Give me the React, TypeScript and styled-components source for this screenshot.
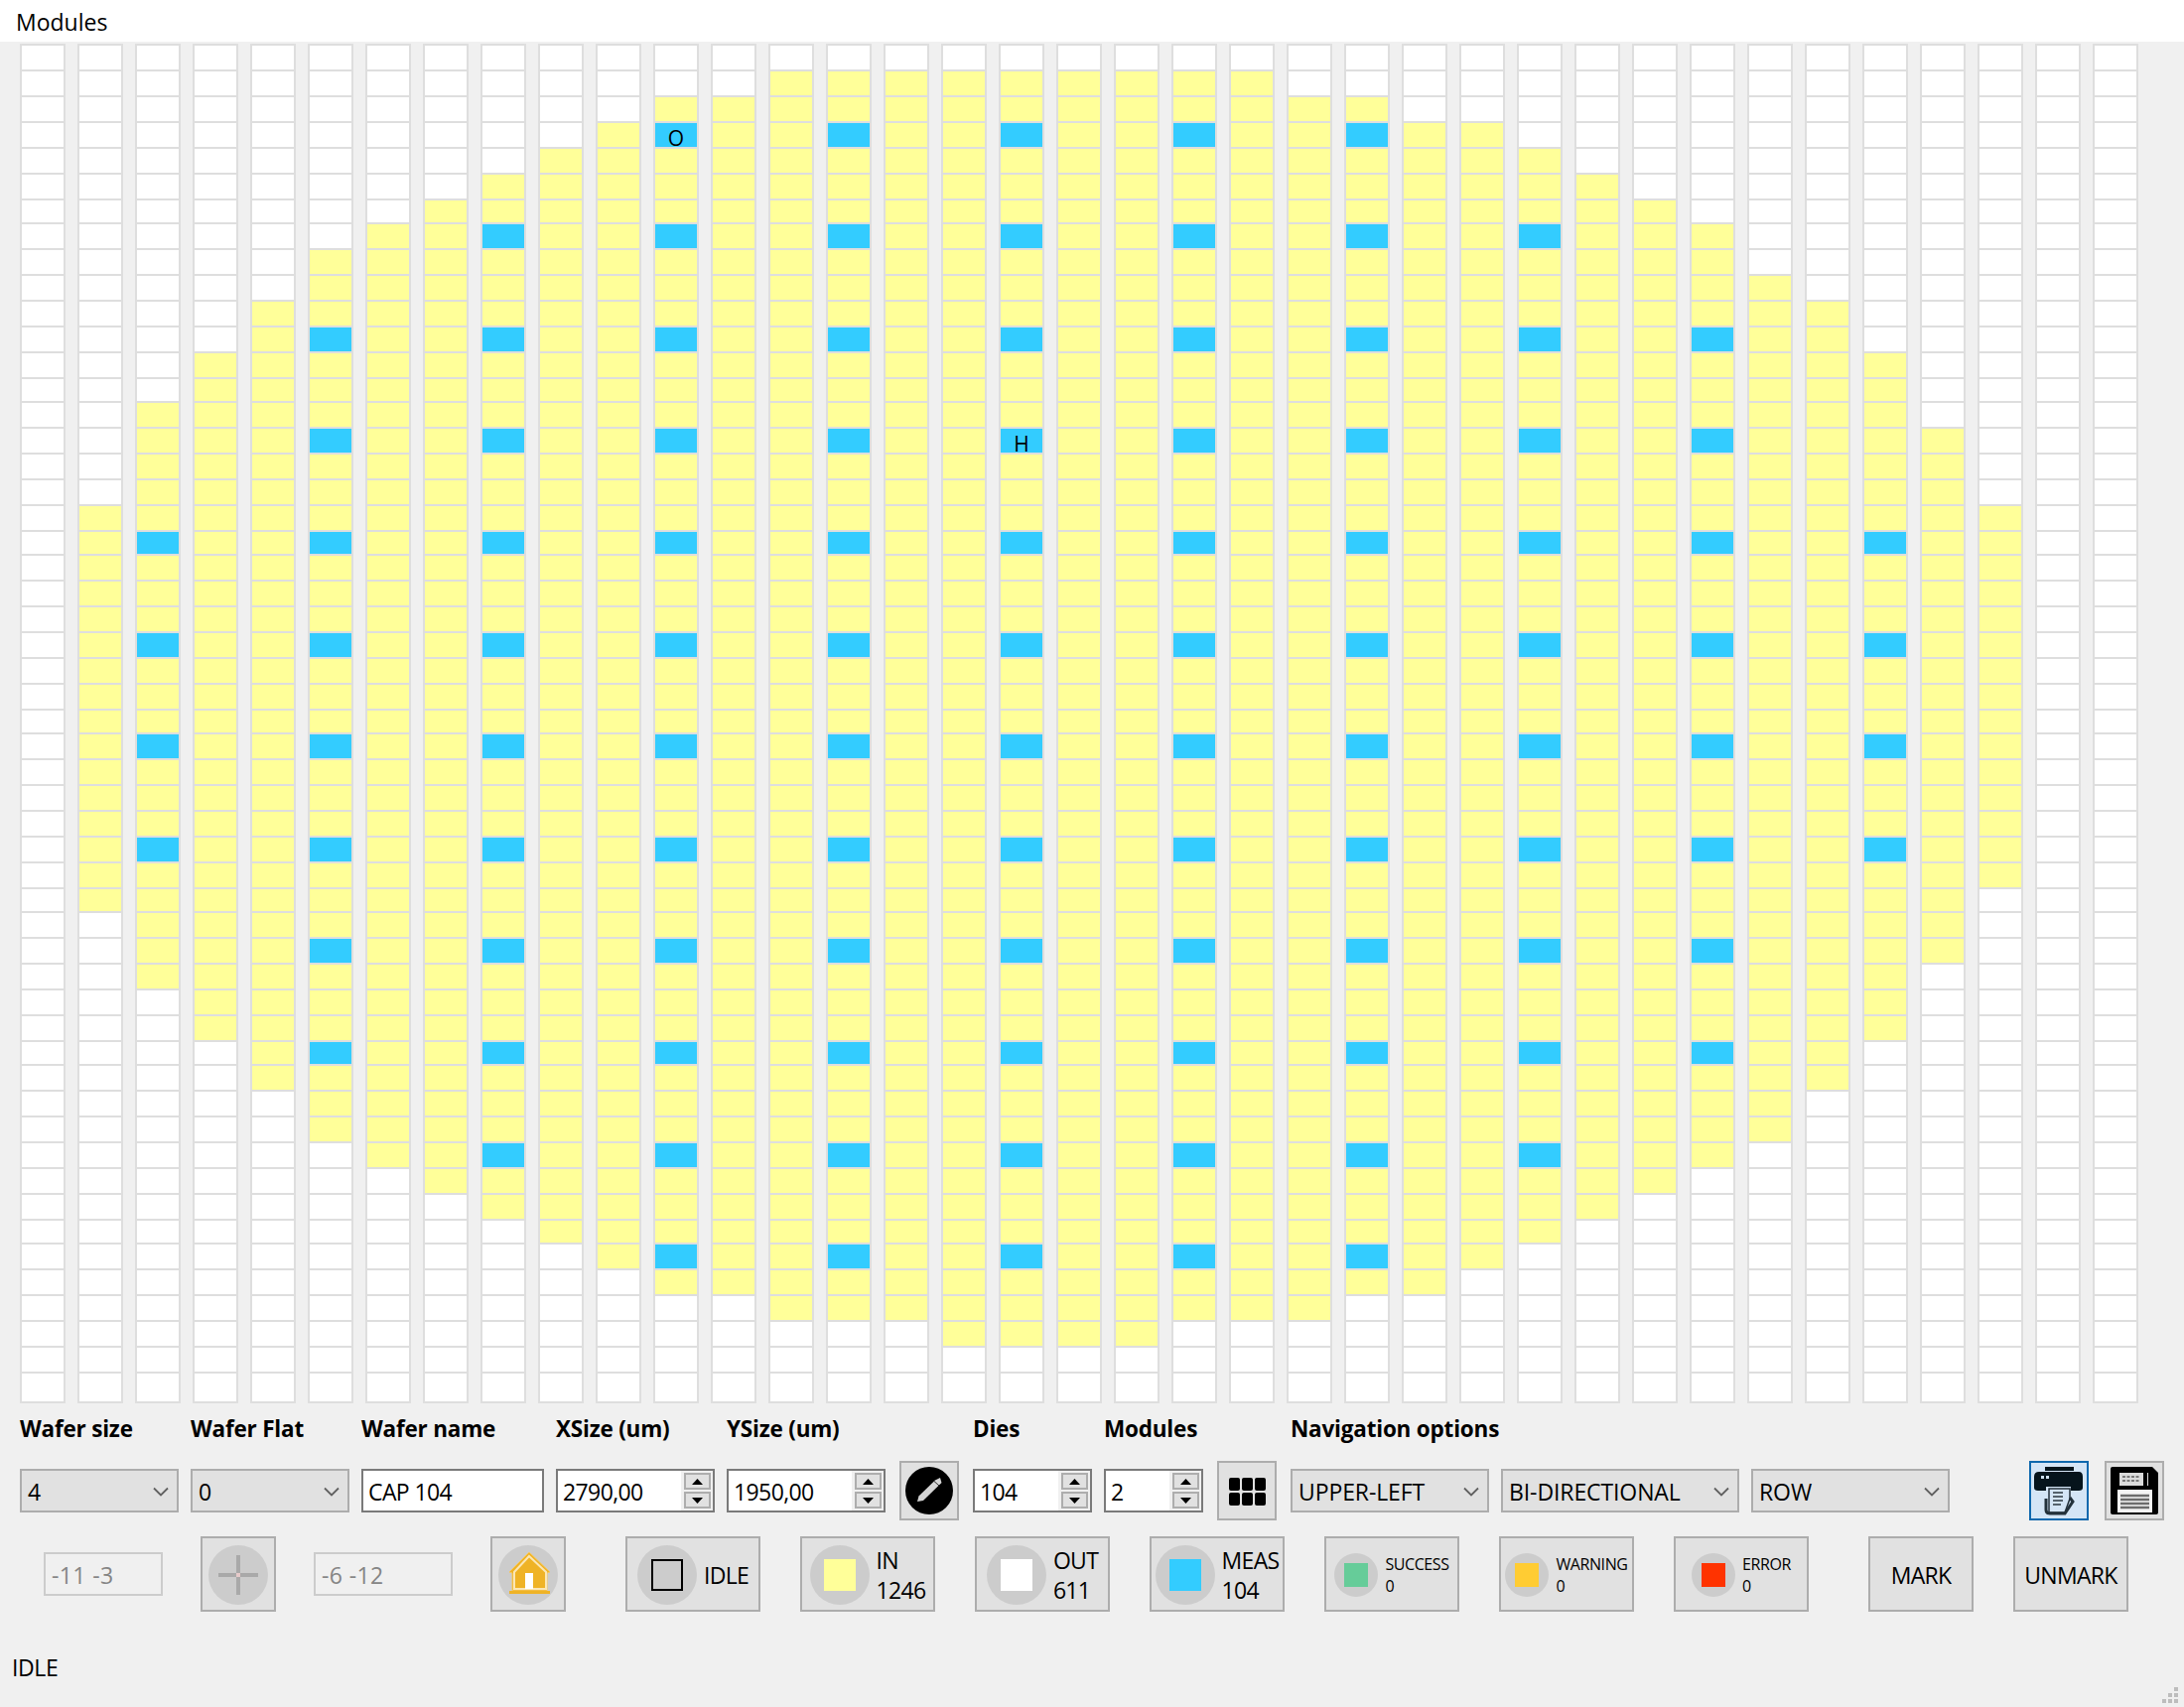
import React from "react";
import styled, { createGlobalStyle } from "styled-components";

const FONT = `"Open Sans", "Noto Sans", "Liberation Sans", sans-serif`;

const Global = createGlobalStyle`
  html, body { margin: 0; padding: 0; background: #f0f0f0; }
  body { font-family: ${FONT}; color: #000; }
  * { box-sizing: border-box; }
`;

const Page = styled.div`
  width: 2200px;
  height: 1720px;
  display: flex;
  flex-direction: column;
  background: #f0f0f0;
  font-size: 23px;
`;

const TitleBar = styled.div`
  height: 42px;
  flex: none;
  background: #fff;
  padding-left: 16px;
  line-height: 44px;
  font-size: 23px;
`;

const ROW_TRACKS = Array.from({ length: 53 }, (_, i) =>
  i === 52 ? "28px" : [6, 13, 19, 26, 33, 39, 46].includes(i) ? "22px" : "24px"
).join(" ");

const Wafer = styled.div`
  margin: 2px 0 0 20px;
  display: flex;
  gap: 12px;
`;

const WaferColumn = styled.div`
  width: 46px;
  display: grid;
  grid-template-rows: ${ROW_TRACKS};
  gap: 2px;
  padding: 2px;
  background: #dedede;
`;

type Kind = "out" | "in" | "meas";
const KIND_COLOR: Record<Kind, string> = { out: "#ffffff", in: "#ffff99", meas: "#33ccff" };

const Cell = styled.div<{ $kind: Kind }>`
  background: ${(p) => KIND_COLOR[p.$kind]};
  display: flex;
  align-items: center;
  justify-content: center;
  font-size: 21px;
  line-height: 24px;
  padding-top: 6px;
`;

const LabelRow = styled.div`
  margin: 10px 0 0 20px;
  display: flex;
  gap: 12px;
  height: 32px;
`;

const Label = styled.div<{ $w: number }>`
  width: ${(p) => p.$w}px;
  flex: none;
  font-size: 22.5px;
  line-height: 32px;
  font-weight: 700;
  letter-spacing: -0.2px;
  white-space: nowrap;
`;

const FieldRow = styled.div`
  margin-top: 16px;
  padding: 0 18px 0 20px;
  height: 60px;
  display: flex;
  align-items: center;
  gap: 12px;
`;

const ComboBox = styled.div<{ $w: number }>`
  width: ${(p) => p.$w}px;
  height: 44px;
  flex: none;
  display: flex;
  align-items: center;
  justify-content: space-between;
  padding: 2px 8px 0 6px;
  background: #e1e1e1;
  border: 2px solid #adadad;
  letter-spacing: -0.1px;
  white-space: nowrap;
`;

const TextBox = styled.div<{ $w: number }>`
  width: ${(p) => p.$w}px;
  height: 44px;
  flex: none;
  display: flex;
  align-items: center;
  padding: 2px 0 0 5px;
  background: #fff;
  border: 2px solid #7a7a7a;
  letter-spacing: -0.6px;
`;

const SpinBox = styled(TextBox)`
  justify-content: space-between;
  padding-top: 0;
`;

const SpinValue = styled.span`
  padding-top: 2px;
`;

const SpinColumn = styled.div`
  width: 32px;
  height: 40px;
  flex: none;
  display: flex;
  flex-direction: column;
  justify-content: center;
  align-items: center;
  gap: 2px;
  background: #f0f0f0;
`;

const SpinButton = styled.div`
  width: 27px;
  height: 17px;
  display: flex;
  align-items: center;
  justify-content: center;
  background: #e1e1e1;
  border: 2px solid #adadad;
`;

const IconButton = styled.div<{ $active?: boolean }>`
  width: 60px;
  height: 60px;
  flex: none;
  margin: 0 2px;
  display: flex;
  align-items: center;
  justify-content: center;
  background: ${(p) => (p.$active ? "#d4e5f6" : "#e1e1e1")};
  border: 2px solid ${(p) => (p.$active ? "#0f68ae" : "#adadad")};
`;

const PushRight = styled.div`
  margin-left: auto;
`;

const ButtonRow = styled.div`
  margin-top: 16px;
  padding-left: 44px;
  height: 76px;
  display: flex;
  align-items: center;
`;

const Group = styled.div<{ $gap: number; $left?: number }>`
  display: flex;
  align-items: center;
  gap: ${(p) => p.$gap}px;
  margin-left: ${(p) => p.$left ?? 0}px;
`;

const CoordBox = styled.div<{ $w: number }>`
  width: ${(p) => p.$w}px;
  height: 44px;
  display: flex;
  align-items: center;
  padding: 2px 0 0 6px;
  border: 2px solid #cccccc;
  color: #858585;
  letter-spacing: 0.4px;
`;

const PushButton = styled.div<{ $w: number }>`
  width: ${(p) => p.$w}px;
  height: 76px;
  flex: none;
  display: flex;
  align-items: center;
  justify-content: center;
  gap: 7px;
  padding-top: 1px;
  background: #e1e1e1;
  border: 2px solid #adadad;
  letter-spacing: -0.7px;
`;

const Circle = styled.div<{ $size: number }>`
  width: ${(p) => p.$size}px;
  height: ${(p) => p.$size}px;
  flex: none;
  display: flex;
  align-items: center;
  justify-content: center;
  border-radius: 50%;
  background: #cccccc;
`;

const Swatch = styled.div<{ $size: number; $color: string; $outline?: boolean }>`
  width: ${(p) => p.$size}px;
  height: ${(p) => p.$size}px;
  background: ${(p) => p.$color};
  border: ${(p) => (p.$outline ? "2px solid #000" : "none")};
`;

const StatText = styled.div<{ $small?: boolean }>`
  display: flex;
  flex-direction: column;
  font-size: ${(p) => (p.$small ? 16 : 23)}px;
  line-height: ${(p) => (p.$small ? 22 : 30)}px;
  letter-spacing: ${(p) => (p.$small ? -0.4 : -0.7)}px;
  white-space: nowrap;
`;

const StatusBar = styled.div`
  flex: 1;
  margin-top: 40px;
  padding: 0 6px 4px 12px;
  display: flex;
  justify-content: space-between;
  align-items: flex-start;
  line-height: 32px;
  letter-spacing: -0.4px;
`;

const Grip = styled.svg`
  align-self: flex-end;
  flex: none;
`;

const Chevron = () => (
  <svg width="16" height="10" viewBox="0 0 16 10">
    <path d="M1 1.5 L8 8.5 L15 1.5" fill="none" stroke="#606060" strokeWidth="1.8" />
  </svg>
);

const Arrow = ({ up }: { up?: boolean }) => (
  <svg width="11" height="6" viewBox="0 0 11 6">
    <path d={up ? "M5.5 0 L11 6 L0 6 Z" : "M0 0 L11 0 L5.5 6 Z"} fill="#000" />
  </svg>
);

const Spin = () => (
  <SpinColumn>
    <SpinButton>
      <Arrow up />
    </SpinButton>
    <SpinButton>
      <Arrow />
    </SpinButton>
  </SpinColumn>
);

const PencilIcon = () => (
  <svg width="56" height="56" viewBox="2 2 56 56">
    <circle cx="30" cy="30" r="24" fill="#000" />
    <path d="M18 41 L19.5 35.5 L36 19.5 L41 17 L42.5 22 L24 40 Z" fill="#d4d4d4" />
    <path d="M35 20.5 L40 25" stroke="#000" strokeWidth="0.8" />
  </svg>
);

const GridIcon = () => (
  <svg width="56" height="56" viewBox="2 2 56 56">
    {[12, 25, 38].flatMap((x) =>
      [17, 32].map((y) => <rect key={`${x}-${y}`} x={x} y={y} width="11" height="13" rx="2" fill="#000" />)
    )}
  </svg>
);

const PrinterIcon = () => (
  <svg width="56" height="56" viewBox="2 2 56 56">
    <rect x="16" y="6" width="29" height="4" fill="#06141c" />
    <path d="M10 11 H50 Q54 11 54 16 V27 Q54 30 50 30 H42 V26 H17 V30 H9 Q5 30 5 27 V16 Q5 11 10 11 Z" fill="#06141c" />
    <rect x="12" y="15" width="3" height="3" fill="#cfe0ee" />
    <rect x="17" y="15" width="3" height="3" fill="#cfe0ee" />
    <path d="M20 28 H41 V38 L36 52 H20 Z" fill="#d4e5f6" stroke="#23313b" strokeWidth="1.5" />
    <path d="M24 32 H34 M24 36 H34 M24 40 H34 M24 44 H32" stroke="#55626c" strokeWidth="2" />
    <path d="M17 38 V49 Q17 53 21 53 H36 L44 41 L41 37" fill="none" stroke="#23313b" strokeWidth="3" />
  </svg>
);

const FloppyIcon = () => (
  <svg width="56" height="56" viewBox="2 2 56 56">
    <path d="M8 6 H48 L54 12 V52 Q54 54 52 54 H8 Q6 54 6 52 V8 Q6 6 8 6 Z" fill="#000" />
    <rect x="15" y="12" width="29" height="13" fill="#dcdcdc" />
    <rect x="39" y="12" width="4" height="13" fill="#000" />
    <path d="M18 16 H36 M18 20 H36" stroke="#7a7a7a" strokeWidth="2" strokeDasharray="3 1.5" />
    <rect x="13" y="29" width="35" height="23" fill="#f4f4f4" />
    <path d="M16 35 H45 M16 39 H45 M16 43 H45 M16 47 H45" stroke="#6c6c6c" strokeWidth="2.4" />
  </svg>
);

const CrossIcon = () => (
  <svg width="60" height="60" viewBox="0 0 60 60">
    <path d="M10 30 H50" stroke="#a9a9a9" strokeWidth="4" />
    <path d="M30 10 V50" stroke="#a9a9a9" strokeWidth="4" />
    <rect x="28" y="28" width="4" height="4" fill="#e6caca" />
  </svg>
);

const HomeIcon = () => (
  <svg width="60" height="60" viewBox="0 0 60 60">
    <path d="M31 7 L52 27 L49 28 V46 H14 V28 L11 27 Z" fill="#efb326" stroke="#f6c964" strokeWidth="1" />
    <path d="M31 11 L48 27 V44 H16 V27 Z" fill="none" stroke="#fbe7b6" strokeWidth="2" />
    <rect x="27" y="28" width="8" height="16" fill="#fff" />
    <rect x="11" y="46" width="41" height="3" fill="#efb326" />
  </svg>
);

const RANGES: ([number, number] | null)[] = [
  null, [18, 33], [14, 36], [12, 38], [10, 40], [8, 42], [7, 43], [6, 44], [5, 45], [4, 46],
  [3, 47], [2, 48], [2, 48], [1, 49], [1, 49], [1, 49], [1, 50], [1, 50], [1, 50], [1, 50],
  [1, 49], [1, 49], [2, 49], [2, 48], [3, 48], [3, 47], [4, 46], [5, 45], [6, 44], [7, 43],
  [9, 42], [10, 40], [12, 38], [15, 35], [18, 32], null, null,
];

const MEAS_RANGES: Record<number, [number, number]> = {
  2: [19, 31], 5: [11, 39], 8: [7, 43], 11: [3, 47], 14: [3, 47], 17: [3, 47],
  20: [3, 47], 23: [3, 47], 26: [7, 43], 29: [11, 39], 32: [19, 31],
};

const CELL_TEXT: Record<string, string> = { "11:3": "O", "17:15": "H" };

const kindOf = (col: number, row: number): Kind => {
  const range = RANGES[col];
  if (!range || row < range[0] || row > range[1]) return "out";
  const meas = MEAS_RANGES[col];
  if (meas && row >= meas[0] && row <= meas[1] && (row - 3) % 4 === 0) return "meas";
  return "in";
};

const LABELS: [string, number][] = [
  ["Wafer size", 160], ["Wafer Flat", 160], ["Wafer name", 184], ["XSize (um)", 160],
  ["YSize (um)", 236], ["Dies", 120], ["Modules", 176], ["Navigation options", 400],
];

const STATS: { top: string; bottom?: string; color: string; outline?: boolean; small?: boolean }[] = [
  { top: "IDLE", color: "#cccccc", outline: true },
  { top: "IN", bottom: "1246", color: "#ffff99" },
  { top: "OUT", bottom: "611", color: "#ffffff" },
  { top: "MEAS", bottom: "104", color: "#33ccff" },
  { top: "SUCCESS", bottom: "0", color: "#66cc99", small: true },
  { top: "WARNING", bottom: "0", color: "#ffcc33", small: true },
  { top: "ERROR", bottom: "0", color: "#ff3300", small: true },
];

export default function App() {
  return (
    <Page>
      <Global />
      <TitleBar>Modules</TitleBar>
      <Wafer>
        {RANGES.map((_, col) => (
          <WaferColumn key={col}>
            {Array.from({ length: 53 }, (_, row) => (
              <Cell key={row} $kind={kindOf(col, row)}>
                {CELL_TEXT[`${col}:${row}`]}
              </Cell>
            ))}
          </WaferColumn>
        ))}
      </Wafer>

      <LabelRow>
        {LABELS.map(([text, w]) => (
          <Label key={text} $w={w}>
            {text}
          </Label>
        ))}
      </LabelRow>

      <FieldRow>
        <ComboBox $w={160}>4<Chevron /></ComboBox>
        <ComboBox $w={160}>0<Chevron /></ComboBox>
        <TextBox $w={184}>CAP 104</TextBox>
        <SpinBox $w={160}><SpinValue>2790,00</SpinValue><Spin /></SpinBox>
        <SpinBox $w={160}><SpinValue>1950,00</SpinValue><Spin /></SpinBox>
        <IconButton><PencilIcon /></IconButton>
        <SpinBox $w={120}><SpinValue>104</SpinValue><Spin /></SpinBox>
        <SpinBox $w={100}><SpinValue>2</SpinValue><Spin /></SpinBox>
        <IconButton><GridIcon /></IconButton>
        <ComboBox $w={200}>UPPER-LEFT<Chevron /></ComboBox>
        <ComboBox $w={240}>BI-DIRECTIONAL<Chevron /></ComboBox>
        <ComboBox $w={200}>ROW<Chevron /></ComboBox>
        <PushRight>
          <IconButton $active><PrinterIcon /></IconButton>
        </PushRight>
        <IconButton><FloppyIcon /></IconButton>
      </FieldRow>

      <ButtonRow>
        <Group $gap={38}>
          <CoordBox $w={120}>-11 -3</CoordBox>
          <PushButton $w={76}><Circle $size={60}><CrossIcon /></Circle></PushButton>
          <CoordBox $w={140}>-6 -12</CoordBox>
          <PushButton $w={76}><Circle $size={60}><HomeIcon /></Circle></PushButton>
        </Group>
        <Group $gap={40} $left={60}>
          {STATS.map((s) => (
            <PushButton key={s.top} $w={136}>
              <Circle $size={s.small ? 44 : 60}>
                <Swatch $size={s.small ? 24 : 32} $color={s.color} $outline={s.outline} />
              </Circle>
              <StatText $small={s.small}>
                <span>{s.top}</span>
                {s.bottom && <span>{s.bottom}</span>}
              </StatText>
            </PushButton>
          ))}
        </Group>
        <Group $gap={40} $left={60}>
          <PushButton $w={106}>MARK</PushButton>
          <PushButton $w={116}>UNMARK</PushButton>
        </Group>
      </ButtonRow>

      <StatusBar>
        <span>IDLE</span>
        <Grip width="16" height="16" viewBox="0 0 16 16">
          {[[12, 0], [6, 6], [12, 6], [0, 12], [6, 12], [12, 12]].map(([x, y]) => (
            <rect key={`${x}-${y}`} x={x} y={y} width="4" height="4" fill="#bdbdbd" />
          ))}
        </Grip>
      </StatusBar>
    </Page>
  );
}
